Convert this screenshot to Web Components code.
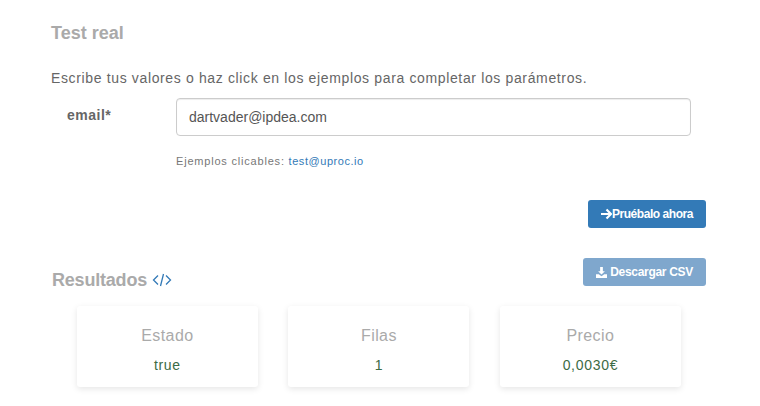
<!DOCTYPE html>
<html lang="es">
<head>
<meta charset="utf-8">
<title>Test real</title>
<style>
  body {
    margin: 0;
    background: #fff;
    font-family: "Liberation Sans", Arial, sans-serif;
    color: #666;
  }
</style>
</head>
<body>
<test-panel></test-panel>

<script>
class ParamField extends HTMLElement {
  constructor() {
    super();
    this.attachShadow({ mode: 'open' });
    this.shadowRoot.innerHTML = `
      <style>
        :host {
          display: grid;
          grid-template-columns: 125px 515px;
        }
        label {
          padding: 9px 0 0 16px;
          font-size: 14px;
          font-weight: bold;
          letter-spacing: 0.5px;
          line-height: 16px;
          color: #666;
        }
        input {
          box-sizing: border-box;
          width: 100%;
          height: 38px;
          padding: 0 12px;
          border: 1px solid #ccc;
          border-radius: 4px;
          font: 14px "Liberation Sans", Arial, sans-serif;
          color: #555;
          background: #fff;
          box-shadow: inset 0 1px 1px rgba(0, 0, 0, 0.075);
          outline: none;
        }
        .hint {
          grid-column: 2;
          margin-top: 18px;
          font-size: 11px;
          line-height: 14px;
          letter-spacing: 0.8px;
          color: #777;
        }
        a {
          color: #337ab7;
          letter-spacing: 0.55px;
          text-decoration: none;
        }
      </style>
      <label>email*</label>
      <input type="text" value="dartvader@ipdea.com">
      <div class="hint">Ejemplos clicables: <a href="#"><slot></slot></a></div>
    `;
  }
}

class ActionButton extends HTMLElement {
  constructor() {
    super();
    this.attachShadow({ mode: 'open' });
    this.shadowRoot.innerHTML = `
      <style>
        :host {
          display: inline-flex;
          align-items: center;
          justify-content: center;
          box-sizing: border-box;
          height: 28px;
          padding: 0 13px;
          border-radius: 3px;
          background: #337ab7;
          color: #fff;
          font-size: 12px;
          font-weight: bold;
          letter-spacing: -0.45px;
        }
        :host([disabled]) {
          background: #7fa7cd;
          letter-spacing: -0.3px;
        }
      </style>
      <slot name="icon"></slot><slot></slot>
    `;
  }
}

class StatCard extends HTMLElement {
  constructor() {
    super();
    this.attachShadow({ mode: 'open' });
    this.shadowRoot.innerHTML = `
      <style>
        :host {
          display: block;
          box-sizing: border-box;
          width: 181px;
          height: 81px;
          padding-top: 21px;
          border-radius: 3px;
          background: #fff;
          box-shadow: 0 2px 6px rgba(0, 0, 0, 0.1);
          text-align: center;
        }
        .title {
          font-size: 16px;
          line-height: 18px;
          letter-spacing: 0.4px;
          color: #aaa;
        }
        .value {
          margin-top: 12px;
          font-size: 14px;
          line-height: 16px;
          letter-spacing: 0.7px;
          color: #3c6b45;
        }
      </style>
      <div class="title"></div>
      <div class="value"><slot></slot></div>
    `;
  }

  connectedCallback() {
    this.shadowRoot.querySelector('.title').textContent = this.getAttribute('title');
  }
}

class TestPanel extends HTMLElement {
  constructor() {
    super();
    this.attachShadow({ mode: 'open' });
    this.shadowRoot.innerHTML = `
      <style>
        :host {
          display: block;
          box-sizing: border-box;
          width: 760px;
          height: 406px;
          overflow: hidden;
          padding: 23px 54px 0 51px;
        }
        h2 {
          margin: 0;
          font-size: 18px;
          line-height: 20px;
          font-weight: bold;
          color: #aaa;
        }
        p {
          margin: 25px 0 10px;
          font-size: 14px;
          line-height: 20px;
          letter-spacing: 0.64px;
          color: #666;
        }
        .run {
          display: flex;
          justify-content: flex-end;
          margin-top: 32px;
        }
        .results-head {
          display: flex;
          justify-content: space-between;
          align-items: center;
          margin-top: 26px;
        }
        .results-head h2 {
          display: flex;
          align-items: center;
          gap: 5px;
          padding: 16px 0 0 1px;
          letter-spacing: -0.2px;
        }
        .cards {
          display: flex;
          gap: 30.5px;
          margin: 16px 0 0 25.9px;
        }
        svg { display: block; }
      </style>
      <h2>Test real</h2>
      <p>Escribe tus valores o haz click en los ejemplos para completar los parámetros.</p>
      <param-field>test@uproc.io</param-field>
      <div class="run">
        <action-button>
          <svg slot="icon" width="11" height="12" viewBox="0 0 11 12"><path d="M5.500 1.500 10 6l-4.500 4.500M9.500 6H0" fill="none" stroke="#fff" stroke-width="2.200"/></svg>
          Pruébalo ahora
        </action-button>
      </div>
      <div class="results-head">
        <h2>Resultados
          <svg width="20" height="14" viewBox="0 0 20 14" fill="none" stroke="#337ab7" stroke-width="1.300"><path d="M6 2.500 1.500 7 6 11.500M14 2.500 18.500 7 14 11.500M11.500 1l-3 12"/></svg>
        </h2>
        <action-button disabled>
          <svg slot="icon" width="11" height="11" viewBox="0 0 12 12" style="margin-right:3px"><path fill="#fff" d="M4.500 0h3v4.500h2.200L6 8.300 2.300 4.500h2.200zM0 8h3l3 2 3-2h3v4H0z"/></svg>
          Descargar CSV
        </action-button>
      </div>
      <div class="cards">
        <stat-card title="Estado">true</stat-card>
        <stat-card title="Filas">1</stat-card>
        <stat-card title="Precio">0,0030€</stat-card>
      </div>
    `;
  }
}

customElements.define('param-field', ParamField);
customElements.define('action-button', ActionButton);
customElements.define('stat-card', StatCard);
customElements.define('test-panel', TestPanel);
</script>
</body>
</html>
